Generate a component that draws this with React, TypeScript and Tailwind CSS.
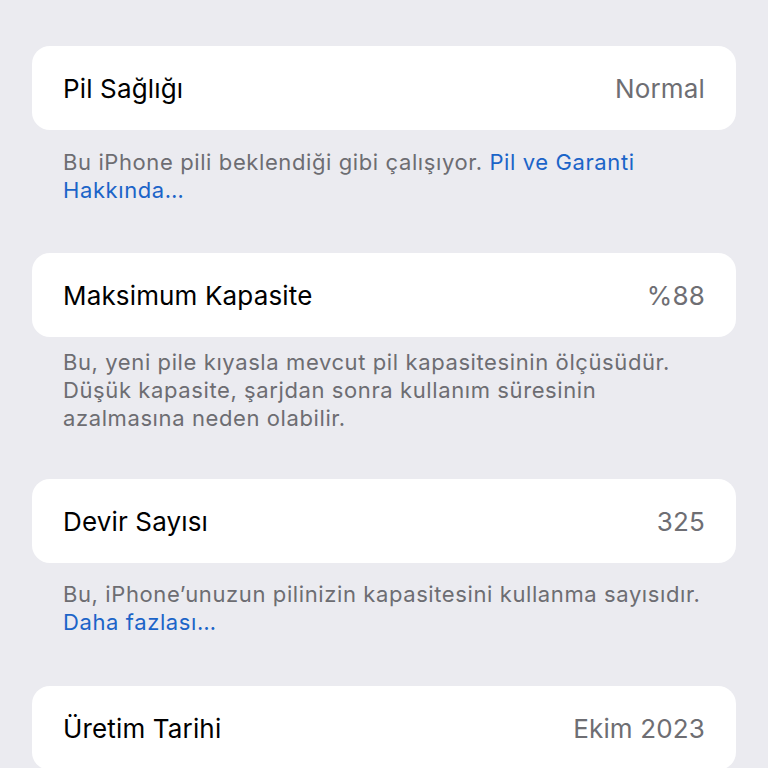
const rows = [
  { label: 'Pil Sağlığı', value: 'Normal' },
  { label: 'Maksimum Kapasite', value: '%88' },
  { label: 'Devir Sayısı', value: '325' },
  { label: 'Üretim Tarihi', value: 'Ekim 2023' },
]

function Row({ label, value, className = '' }: { label: string; value: string; className?: string }) {
  return (
    <div className={`h-[84px] bg-white rounded-[18px] px-[31px] flex items-center justify-between ${className}`}>
      <span className="text-[26px] text-black tracking-[0.15px]">{label}</span>
      <span className="text-[26px] text-[#6e6e73] tracking-[0.15px]">{value}</span>
    </div>
  )
}

export default function App() {
  return (
    <div
      className="min-h-screen bg-[#ebebf0] px-8 pt-[46px] overflow-hidden"
      style={{ fontFamily: 'Inter, "Noto Sans", sans-serif' }}
    >
      {/* Pil sağlığı */}
      <Row {...rows[0]} />
      <p className="mt-[18px] pl-[31px] pr-1 text-[22px] leading-[28px] text-[#6d6d72] tracking-[0.6px]">
        Bu iPhone pili beklendiği gibi çalışıyor. <span className="text-[#1b64c8]">Pil ve Garanti</span>
        <br />
        <span className="text-[#1b64c8]">Hakkında…</span>
      </p>

      {/* Maksimum kapasite */}
      <Row {...rows[1]} className="mt-[49px]" />
      <p className="mt-[11px] pl-[31px] pr-1 text-[22px] leading-[28px] text-[#6d6d72] tracking-[0.6px]">
        Bu, yeni pile kıyasla mevcut pil kapasitesinin ölçüsüdür.
        <br />
        Düşük kapasite, şarjdan sonra kullanım süresinin
        <br />
        azalmasına neden olabilir.
      </p>

      {/* Devir sayısı */}
      <Row {...rows[2]} className="mt-[47px]" />
      <p className="mt-[17px] pl-[31px] pr-1 text-[22px] leading-[28px] text-[#6d6d72] tracking-[0.6px]">
        Bu, iPhone’unuzun pilinizin kapasitesini kullanma sayısıdır.
        <br />
        <span className="text-[#1b64c8]">Daha fazlası…</span>
      </p>

      {/* Üretim tarihi */}
      <Row {...rows[3]} className="mt-[50px]" />
    </div>
  )
}
